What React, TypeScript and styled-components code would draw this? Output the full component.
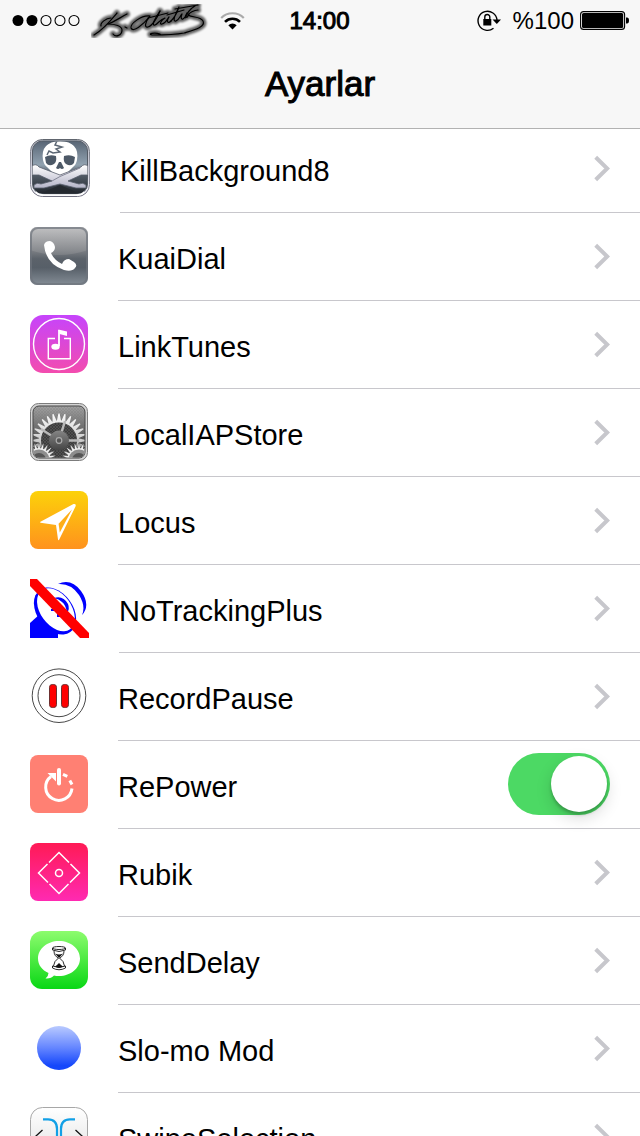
import React, { useState } from "react";
import styled, { createGlobalStyle } from "styled-components";

const GlobalStyle = createGlobalStyle`
  *, *::before, *::after { box-sizing: border-box; }
  body {
    margin: 0;
    background: #fff;
    color: #000;
    font-family: "Liberation Sans", Arial, Helvetica, sans-serif;
  }
`;

const Screen = styled.div`
  display: flex;
  flex-direction: column;
  height: 100vh;
`;

const Header = styled.header`
  flex: none;
  background: #f7f7f7;
  border-bottom: 1px solid #b2b2b2;
`;

const StatusBar = styled.div`
  display: grid;
  grid-template-columns: 1fr auto 1fr;
  align-items: center;
  height: 40px;
  padding: 2px 11px 0 12px;
  font-size: 24px;
  line-height: 38px;
`;

const StatusGroup = styled.div<{ $end?: boolean }>`
  display: flex;
  align-items: center;
  justify-content: ${(p) => (p.$end ? "flex-end" : "flex-start")};
  gap: ${(p) => (p.$end ? "6px" : "9px")};

  svg { display: block; flex: none; }
`;

const Clock = styled.time`
  padding-right: 2px;
  -webkit-text-stroke: 1px #000;
`;

const Percent = styled.span`
  padding-left: 6px;
`;

const Title = styled.h1`
  margin: 0;
  font-size: 35px;
  font-weight: 400;
  line-height: 88px;
  text-align: center;
  -webkit-text-stroke: 1px #000;
`;

const Scroller = styled.main`
  flex: 1;
  min-height: 0;
  overflow-y: auto;
  scrollbar-width: none;
`;

const List = styled.ul`
  list-style: none;
  margin: -4px 0 0;
  padding: 0;
`;

const Row = styled.li`
  display: flex;
  height: 88px;
  padding-left: 30px;
`;

const RowLink = styled.a`
  display: flex;
  flex: 1;
  gap: 30px;
  color: inherit;
  text-decoration: none;
`;

const RowPlain = styled.div`
  display: flex;
  flex: 1;
  gap: 30px;
`;

const IconSlot = styled.span`
  display: flex;
  align-items: center;
  flex: none;
  padding-bottom: 2px;

  svg { display: block; }
`;

const RowBody = styled.span`
  display: flex;
  flex: 1;
  align-items: center;
  justify-content: space-between;
  padding-right: 30px;
  border-bottom: 1px solid #c8c7cc;
`;

const labelText = `
  padding-top: 4px;
  font-size: 29px;
  line-height: 32px;
`;

const RowText = styled.span`${labelText}`;
const SwitchLabel = styled.label`${labelText}`;

const Switch = styled.input`
  appearance: none;
  display: flex;
  width: 102px;
  height: 62px;
  margin: 0 0 2px;
  padding: 3px;
  border-radius: 31px;
  background: ${(p) => (p.checked ? "#4cd964" : "#e5e5e5")};
  justify-content: ${(p) => (p.checked ? "flex-end" : "flex-start")};
  cursor: pointer;

  &::before {
    content: "";
    width: 56px;
    height: 56px;
    border-radius: 50%;
    background: #fff;
    box-shadow: 0 3px 3px rgba(0, 0, 0, 0.2), 0 6px 16px rgba(0, 0, 0, 0.15);
  }
`;

/* ---------- Status bar drawings ---------- */

const SignalDots = () => (
  <svg width="70" height="14" viewBox="0 0 70 14" role="img" aria-label="Signal">
    {[0, 1, 2, 3, 4].map((i) => (
      <circle key={i} cx={6 + i * 14} cy="6.5" r={i < 2 ? 5.5 : 5} fill={i < 2 ? "#000" : "none"} stroke="#000" strokeWidth={i < 2 ? 0 : 1.1} />
    ))}
  </svg>
);

const signature = [
  "M29 12 C24 18 16 28 6 34",
  "M13 25 C12 22 18 17 23 17",
  "M39 13 C33 16 26 21 20 23",
  "M20 23 C27 23 34 25 34 29 C34 34 28 37 25 33",
  "M37 26 L39 27",
  "M62 15 C53 14 42 23 43 27 C45 32 55 24 62 15 C57 21 56 27 60 26 C64 25 70 16 72 10",
  "M72 10 C67 17 63 25 67 24 C70 23 72 18 77 17 C73 19 71 24 74 23 C78 22 80 17 81 16 C78 21 80 23 83 20",
  "M60 17 L80 12",
  "M83 20 C86 17 89 12 91 6 C87 14 84 21 88 20 C91 19 92 15 94 13 C92 18 94 20 97 16 L99 12 C97 17 99 18 101 13",
  "M79 14 L96 9 M87 8 L110 4 M107 5 C103 7 98 13 97 17 M110 9 C106 9 101 12 100 14",
  "M100 14 C105 17 112 15 115 20 C118 26 106 29 96 32 C86 34 74 34 64 34 C59 33 66 31 72 33",
];

const CarrierSignature = () => (
  <svg width="120" height="34" viewBox="3 3 120 34" role="img" aria-label="K. Atatürk">
    <defs>
      <filter id="halo" x="-10%" y="-30%" width="120%" height="160%">
        <feGaussianBlur stdDeviation="1.3" />
      </filter>
    </defs>
    <g fill="none" stroke="#000" strokeLinecap="round" strokeLinejoin="round">
      <g strokeWidth="6" opacity="0.6" filter="url(#halo)">
        {signature.map((d) => <path key={d} d={d} />)}
      </g>
      <g strokeWidth="1.2">
        {signature.map((d) => <path key={d} d={d} />)}
      </g>
    </g>
  </svg>
);

const Wifi = () => (
  <svg width="25" height="19" viewBox="0 0 25 19" role="img" aria-label="Wi-Fi">
    <path d="M1.200 6 A15.800 15.800 0 0 1 23.800 6" fill="none" stroke="#aaa" strokeWidth="2.200" />
    <path d="M5 9.800 A10.600 10.600 0 0 1 20 9.800" fill="none" stroke="#000" strokeWidth="2.600" />
    <path d="M12.500 17.500 L8.300 13.300 A6 6 0 0 1 16.700 13.300 Z" />
  </svg>
);

const RotationLock = () => (
  <svg width="24" height="22" viewBox="0 0 24 22" role="img" aria-label="Rotation lock">
    <path d="M16.500 18.200 A9.500 9.500 0 1 1 20 10" fill="none" stroke="#000" strokeWidth="1.400" />
    <path d="M15.500 9.500 H24 L19.800 14 Z" />
    <rect x="6.300" y="9" width="8" height="6.500" />
    <path d="M7.800 9.500 V7 A2.500 2.500 0 0 1 12.800 7 V9.500" fill="none" stroke="#000" strokeWidth="1.400" />
  </svg>
);

const Battery = () => (
  <svg width="49" height="20" viewBox="0 0 49 20" role="img" aria-label="Battery">
    <rect x="0.600" y="0.600" width="44" height="17.800" rx="3" fill="none" stroke="#000" strokeWidth="1.100" />
    <rect x="2" y="2" width="41.200" height="15" rx="1.600" />
    <path d="M46 6.500 H47 Q49 6.500 49 9.500 Q49 12.500 47 12.500 H46 Z" />
  </svg>
);

const Chevron = () => (
  <svg width="16" height="28" viewBox="0 0 16 28" aria-hidden="true">
    <path d="M1.700 2.200 L13.200 13.500 L1.700 24.800" fill="none" stroke="#c7c7cc" strokeWidth="4" />
  </svg>
);

/* ---------- App icons ---------- */

type Stop = [string, string];

const Gradient = ({ id, stops }: { id: string; stops: Stop[] }) => (
  <linearGradient id={id} x1="0" y1="0" x2="0" y2="1">
    {stops.map(([offset, color]) => <stop key={offset} offset={offset} stopColor={color} />)}
  </linearGradient>
);

const Icon = ({ w = 58, h = 58, children }: { w?: number; h?: number; children: React.ReactNode }) => (
  <svg width={w} height={h} viewBox={`0 0 ${w} ${h}`} aria-hidden="true">{children}</svg>
);

const SkullIcon = () => (
  <Icon w={60}>
    <defs>
      <Gradient id="skBg" stops={[["0", "#586575"], ["0.45", "#91a2b0"], ["0.6", "#59636f"], ["1", "#20252c"]]} />
      <Gradient id="skRim" stops={[["0", "#60656e"], ["0.5", "#a2a3b0"], ["1", "#70707f"]]} />
      <Gradient id="skFrame" stops={[["0", "#b9bcc6"], ["0.5", "#cfcfdb"], ["1", "#f2f2f8"]]} />
      <Gradient id="skBone" stops={[["0", "#ffffff"], ["1", "#b4b4c8"]]} />
      <clipPath id="skClip"><rect x="2.500" y="2.500" width="55" height="52" rx="9" /></clipPath>
    </defs>
    <rect x="0.500" y="0.500" width="59" height="57" rx="12" fill="url(#skFrame)" stroke="url(#skRim)" />
    <rect x="2.500" y="2" width="55" height="53" rx="10" fill="url(#skBg)" stroke="#555c66" />
    <g clipPath="url(#skClip)">
      <path d="M13 21 Q10 3 30 2 Q50 3 47 21 Q46 26 43 28 L39 32 L36 35 Q30 38 24 35 L21 32 L17 28 Q14 26 13 21 Z" fill="#fff" />
      <path d="M15 18 Q20 15 26 17 Q27 23 24 25 Q19 28 16 24 Z M34 17 Q40 15 45 18 L44 24 Q41 28 36 25 Q33 23 34 17 Z M29 23 L26 29 Q28 31 30 29 Q32 31 34 29 L31 23 Z" fill="#4d5967" />
      <path d="M27 2 L25 6 L32 8 L26 10 L30 13 L23 14 L19 12 L17 16" fill="none" stroke="#5d6875" strokeWidth="1.500" />
      <path d="M2 27 Q6 24 9 28 L30 36 L51 28 Q54 24 58 27 V36 L51 36 L38 42 L49 45 Q53 43 56 46 V49 L46 49 L30 45 L14 49 L4 49 V46 Q7 43 11 45 L22 42 L9 36 H2 Z" fill="url(#skBone)" stroke="#59606d" strokeWidth="0.800" />
      <path d="M22 42 L30 37.500 L50 29" fill="none" stroke="#858798" strokeWidth="1" />
      <path d="M16 52 L30 46 L44 52 L48 56 H12 Z" fill="#24292f" />
    </g>
    <path d="M6 53 Q8 56 14 56 H46 Q52 56 54 53" fill="none" stroke="#fff" strokeWidth="1.500" />
  </Icon>
);

const PhoneIcon = () => (
  <Icon>
    <defs>
      <Gradient id="phBg" stops={[["0", "#aaaaac"], ["0.4", "#7d8085"], ["0.55", "#5b626a"], ["0.7", "#575f68"], ["1", "#848d96"]]} />
      <Gradient id="phGloss" stops={[["0", "#d0d0d1"], ["1", "#85888c"]]} />
      <clipPath id="phClip"><rect width="58" height="58" rx="7" /></clipPath>
    </defs>
    <g clipPath="url(#phClip)">
      <rect width="58" height="58" fill="url(#phBg)" />
      <path d="M0 0 H58 V23 Q29 33 0 23 Z" fill="url(#phGloss)" opacity="0.600" />
    </g>
    <rect x="1" y="1" width="56" height="56" rx="7" fill="none" stroke="#6d747c" strokeWidth="2" opacity="0.700" />
    <path d="M14 18 Q15 14 20 14 Q24 15 25 20 Q25 24 21 26 Q24 33 32 37 Q34 32 39 32 L44 35 Q48 38 45 41 Q42 45 34 43 Q16 37 14 18 Z" fill="#fff" />
  </Icon>
);

const LinkTunesIcon = () => (
  <Icon>
    <defs><Gradient id="ltBg" stops={[["0", "#c644fc"], ["1", "#f34cae"]]} /></defs>
    <rect width="58" height="58" rx="13" fill="url(#ltBg)" />
    <g fill="none" stroke="#fff" strokeWidth="1.400">
      <circle cx="29" cy="29" r="25.500" />
      <path d="M25 23.500 H18.300 V43.700 H40.300 V23.500 H34" />
      <path d="M29 31 V15" strokeWidth="1.800" />
    </g>
    <path d="M28.300 14.500 L37 16.500 V21 L29.500 19 Z" fill="#fff" />
    <ellipse cx="25.500" cy="31.800" rx="4.200" ry="3" fill="#fff" />
  </Icon>
);

const gearPath = (cx: number, cy: number, outer: number, inner: number, teeth: number) => {
  const points: string[] = [];
  const at = (radius: number, angle: number) =>
    `${(cx + radius * Math.cos(angle)).toFixed(2)} ${(cy + radius * Math.sin(angle)).toFixed(2)}`;
  const step = (Math.PI * 2) / teeth;
  for (let i = 0; i < teeth; i++) {
    const a = i * step - Math.PI / 2;
    points.push(at(inner, a - step * 0.45), at(outer, a - step * 0.1), at(outer, a + step * 0.1), at(inner, a + step * 0.45));
  }
  return `M${points.join(" L")} Z`;
};

const GearIcon = () => (
  <Icon>
    <defs>
      <Gradient id="grBg" stops={[["0", "#a2a2a2"], ["0.4", "#707070"], ["1", "#262626"]]} />
      <Gradient id="grMetal" stops={[["0", "#fafafa"], ["0.5", "#cccccc"], ["1", "#7e7e7e"]]} />
      <Gradient id="grHub" stops={[["0", "#858585"], ["1", "#444"]]} />
      <pattern id="grMesh" width="3" height="3" patternUnits="userSpaceOnUse">
        <path d="M0 0 L3 3 M3 0 L0 3" stroke="#777" strokeWidth="0.500" />
      </pattern>
      <clipPath id="grClip"><rect x="3.500" y="3.500" width="51" height="51" rx="5" /></clipPath>
    </defs>
    <rect x="0.500" y="0.500" width="57" height="57" rx="8" fill="#d4d4d4" stroke="#7c7c7c" />
    <rect x="3" y="3" width="52" height="52" rx="6" fill="url(#grBg)" stroke="#444" />
    <g clipPath="url(#grClip)">
      <rect width="58" height="58" fill="url(#grMesh)" opacity="0.500" />
      <path d={gearPath(29, 37.5, 27, 20, 28)} fill="url(#grMetal)" />
      <circle cx="29" cy="37.500" r="18" fill="#3c3c3c" />
      <circle cx="29" cy="37.500" r="18" fill="url(#grMesh)" opacity="0.600" />
      <path d="M29 37.500 L35 18 M29 37.500 L11 26 M29 37.500 H49" stroke="#b9b9b9" strokeWidth="2.500" />
      <circle cx="29" cy="37.500" r="10" fill="url(#grHub)" />
      <circle cx="29" cy="37.500" r="2.800" fill="#555" stroke="#aaa" strokeWidth="1.200" />
      {[9, 49].map((cx) => (
        <g key={cx}>
          <path d={gearPath(cx, 57, 17, 12, 24)} fill="#ededed" stroke="#333" strokeWidth="0.500" />
          <circle cx={cx} cy="57" r="10.500" fill="#8d8d8d" />
          <circle cx={cx} cy="57" r="7" fill="#555" />
        </g>
      ))}
    </g>
  </Icon>
);

const LocusIcon = () => (
  <Icon>
    <defs><Gradient id="loBg" stops={[["0", "#fcd20a"], ["1", "#ff921d"]]} /></defs>
    <rect width="58" height="58" rx="8" fill="url(#loBg)" />
    <path d="M10 31 L43.500 13 Q46.500 12.500 45.500 15.500 L29 49 Q28.300 49.500 28 48.500 L26 34 L10.500 31.800 Z" fill="#fff" />
    <path d="M42 18.500 L28.600 32.800 L29.800 41.500 Z" fill="#feae16" />
  </Icon>
);

const AntennaIcon = () => (
  <Icon w={59} h={59}>
    <path d="M0 44 L10 35 L28 52 V59 H0 Z" fill="#00f" />
    <g transform="rotate(-36 25 32)">
      <ellipse cx="25" cy="32" rx="18" ry="26" fill="#00f" />
      <ellipse cx="26.500" cy="31.500" rx="15.500" ry="24" fill="#fff" />
    </g>
    <path d="M28 5 Q41 -1 51 12 Q61 26 52 36 Q56 27 49 16 Q41 4 28 5 Z" fill="#00f" />
    <path d="M24 19 Q33 16 38 25 Q40 30 37 34 Q36 26 32 23 Q29 20 24 19 Z M21 30 H27 V32 H21 Z M27 35 H30 V38 H27 Z" fill="#00f" />
    <path d="M0 0 H7 L59 54 V59 H50 L0 7 Z" fill="#f00" />
  </Icon>
);

const PauseIcon = () => (
  <Icon>
    <g fill="none" stroke="#333" strokeWidth="0.900">
      <circle cx="29" cy="28.700" r="26.800" />
      <circle cx="29" cy="28.700" r="21" />
    </g>
    <g fill="#f00" stroke="#6d3030" strokeWidth="1">
      <rect x="19.500" y="17.500" width="7" height="23" rx="2.800" />
      <rect x="31.500" y="17.500" width="7" height="23" rx="2.800" />
    </g>
  </Icon>
);

const PowerIcon = () => (
  <Icon>
    <rect width="58" height="58" rx="8" fill="#ff8073" />
    <g fill="none" stroke="#fff" strokeWidth="3">
      <path d="M42 33.500 A13.200 13.200 0 1 1 21 21.500" />
      <path d="M29 15 V28.500" strokeWidth="4" strokeLinecap="round" />
      <path d="M33 19.300 L37.300 21.300 M39.800 25.500 L42 29.500" />
    </g>
    <path d="M17.500 18 H26 V26.500 Z" fill="#fff" />
  </Icon>
);

const RubikIcon = () => (
  <Icon>
    <defs><Gradient id="ruBg" stops={[["0", "#ff1a55"], ["1", "#ff2ab2"]]} /></defs>
    <rect width="58" height="58" rx="8" fill="url(#ruBg)" />
    <g fill="none" stroke="#fff" strokeWidth="1.500">
      <path d="M19 19.500 L29 9.500 L39 19.500 M40.500 21 L49.500 30 L40 39.500 M38.500 41 L29 50.500 L19.500 41 M18 39.500 L8.500 30 L17.500 21" />
      <circle cx="29" cy="30" r="3.500" />
    </g>
  </Icon>
);

const SendDelayIcon = () => (
  <Icon>
    <defs><Gradient id="sdBg" stops={[["0", "#8dfc6e"], ["1", "#09d715"]]} /></defs>
    <rect width="58" height="58" rx="12" fill="url(#sdBg)" />
    <path d="M29 10 C41 10 50 18 50 27.500 C50 37 41 45 29 45 Q26 45 24 44.500 Q21 48 15.500 47.500 Q18.500 45 18.500 42 C12 39 8 34 8 27.500 C8 18 17 10 29 10 Z" fill="#fff" />
    <g fill="none" stroke="#111" strokeWidth="0.900">
      <ellipse cx="29" cy="17" rx="6.500" ry="1.500" />
      <path d="M22.500 17 V19 Q29 22 35.500 19 V17 M24 20 Q24 25 28.500 27 Q24 30 23.500 35 M34 20 Q34 25 29.500 27 Q34 30 34.500 35" />
      <path d="M22.500 35 V37 Q29 40.500 35.500 37 V35 Q29 38 22.500 35" />
    </g>
    <path d="M25 22.500 Q29 24.500 33 22.500 L29 27 Z M25 35.500 L27 34 L29 32 L31 34 L33 35.500 Q29 38 25 35.500 Z" fill="#111" />
  </Icon>
);

const SloMoIcon = () => (
  <Icon>
    <defs><Gradient id="smBg" stops={[["0", "#b9caff"], ["0.5", "#6485ff"], ["0.9", "#1547fb"], ["1", "#1547fb"]]} /></defs>
    <circle cx="29" cy="29" r="22" fill="url(#smBg)" />
  </Icon>
);

const SwipeIcon = () => (
  <Icon>
    <defs><Gradient id="swBg" stops={[["0", "#ffffff"], ["1", "#dedede"]]} /></defs>
    <rect x="0.500" y="0.500" width="57" height="57" rx="12" fill="url(#swBg)" stroke="#a7a7a7" />
    <g fill="none" stroke="#12a0e6" strokeWidth="2.200">
      <path d="M13 12.300 H18 Q27 12.300 27 22 V36 Q27 46 18 46 H13 M45 12.300 H40 Q31 12.300 31 22 V36 Q31 46 40 46 H45" />
    </g>
    <path d="M12.500 23 L6 29 L12.500 35 M45.500 23 L52 29 L45.500 35" fill="none" stroke="#111" strokeWidth="1.300" />
  </Icon>
);

/* ---------- Page ---------- */

const items: { name: string; icon: React.FC; toggle?: boolean }[] = [
  { name: "KillBackground8", icon: SkullIcon },
  { name: "KuaiDial", icon: PhoneIcon },
  { name: "LinkTunes", icon: LinkTunesIcon },
  { name: "LocalIAPStore", icon: GearIcon },
  { name: "Locus", icon: LocusIcon },
  { name: "NoTrackingPlus", icon: AntennaIcon },
  { name: "RecordPause", icon: PauseIcon },
  { name: "RePower", icon: PowerIcon, toggle: true },
  { name: "Rubik", icon: RubikIcon },
  { name: "SendDelay", icon: SendDelayIcon },
  { name: "Slo-mo Mod", icon: SloMoIcon },
  { name: "SwipeSelection", icon: SwipeIcon },
];

const ToggleRow = ({ name, icon: AppIcon }: { name: string; icon: React.FC }) => {
  const [on, setOn] = useState(true);
  return (
    <RowPlain>
      <IconSlot><AppIcon /></IconSlot>
      <RowBody>
        <SwitchLabel htmlFor={name}>{name}</SwitchLabel>
        <Switch id={name} type="checkbox" checked={on} onChange={(e) => setOn(e.target.checked)} />
      </RowBody>
    </RowPlain>
  );
};

const LinkRow = ({ name, icon: AppIcon }: { name: string; icon: React.FC }) => (
  <RowLink href={`#${name.replace(/\s/g, "-")}`}>
    <IconSlot><AppIcon /></IconSlot>
    <RowBody>
      <RowText>{name}</RowText>
      <Chevron />
    </RowBody>
  </RowLink>
);

export default function App() {
  return (
    <Screen>
      <GlobalStyle />
      <Header>
        <StatusBar>
          <StatusGroup>
            <SignalDots />
            <CarrierSignature />
            <Wifi />
          </StatusGroup>
          <Clock>14:00</Clock>
          <StatusGroup $end>
            <RotationLock />
            <Percent>%100</Percent>
            <Battery />
          </StatusGroup>
        </StatusBar>
        <Title>Ayarlar</Title>
      </Header>
      <Scroller>
        <List>
          {items.map(({ name, icon, toggle }) => (
            <Row key={name}>
              {toggle ? <ToggleRow name={name} icon={icon} /> : <LinkRow name={name} icon={icon} />}
            </Row>
          ))}
        </List>
      </Scroller>
    </Screen>
  );
}
